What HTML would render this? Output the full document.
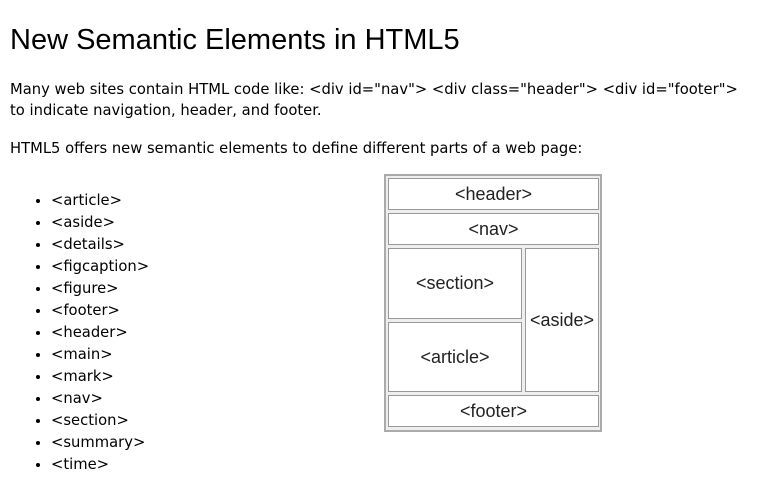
<!DOCTYPE html>
<html><head><style>
body{margin:0;width:766px;height:485px;background:#fff;font-family:"Liberation Sans",sans-serif;color:#000;position:relative;overflow:hidden}
h1{position:absolute;left:10px;top:24px;margin:0;font-weight:normal;font-size:29px;}
p{position:absolute;left:10px;margin:0;font-family:"DejaVu Sans",sans-serif;font-size:14.75px;line-height:21px;white-space:nowrap}
ul{position:absolute;left:0;top:190px;margin:0;padding-left:51px;font-family:"DejaVu Sans",sans-serif;font-size:14.75px;line-height:22px}
.d{position:absolute;left:384px;top:174px;width:214px;height:254px;border:2px solid #aaa;background:#eee}
.b{position:absolute;background:#fff;border:1px solid #999;display:flex;align-items:center;justify-content:center;font-size:18px;color:#222;box-sizing:border-box}
</style></head><body>
<h1>New Semantic Elements in HTML5</h1>
<p style="top:79px">Many web sites contain HTML code like: &lt;div id="nav"&gt; &lt;div class="header"&gt; &lt;div id="footer"&gt;<br>to indicate navigation, header, and footer.</p>
<p style="top:138px">HTML5 offers new semantic elements to define different parts of a web page:</p>
<ul>
<li>&lt;article&gt;</li><li>&lt;aside&gt;</li><li>&lt;details&gt;</li><li>&lt;figcaption&gt;</li><li>&lt;figure&gt;</li><li>&lt;footer&gt;</li><li>&lt;header&gt;</li><li>&lt;main&gt;</li><li>&lt;mark&gt;</li><li>&lt;nav&gt;</li><li>&lt;section&gt;</li><li>&lt;summary&gt;</li><li>&lt;time&gt;</li>
</ul>
<div class="d"></div>
<div class="b" style="left:388px;top:178px;width:211px;height:32px">&lt;header&gt;</div>
<div class="b" style="left:388px;top:213px;width:211px;height:32px">&lt;nav&gt;</div>
<div class="b" style="left:388px;top:248px;width:134px;height:71px">&lt;section&gt;</div>
<div class="b" style="left:388px;top:322px;width:134px;height:70px">&lt;article&gt;</div>
<div class="b" style="left:525px;top:248px;width:74px;height:144px">&lt;aside&gt;</div>
<div class="b" style="left:388px;top:395px;width:211px;height:32px">&lt;footer&gt;</div>
</body></html>
